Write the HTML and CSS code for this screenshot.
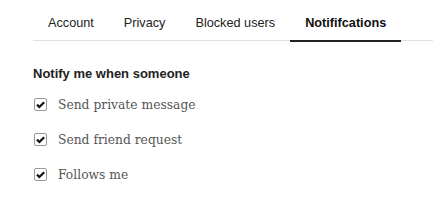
FILE: index.html
```html
<!DOCTYPE html>
<html>
<head>
<meta charset="utf-8">
<link rel="stylesheet" href="styles.css">
</head>
<body>
<div class="page">
  <nav class="tabs">
    <a class="tab">Account</a>
    <a class="tab">Privacy</a>
    <a class="tab">Blocked users</a>
    <a class="tab active">Notififcations</a>
  </nav>
  <section class="panel">
    <h3 class="title">Notify me when someone</h3>
    <label class="opt"><span class="box"><svg viewBox="0 0 13 13" width="13" height="13"><path d="M3 6.6 L5.4 9 L10.2 4.2" fill="none" stroke="#111" stroke-width="2.2"/></svg></span>Send private message</label>
    <label class="opt"><span class="box"><svg viewBox="0 0 13 13" width="13" height="13"><path d="M3 6.6 L5.4 9 L10.2 4.2" fill="none" stroke="#111" stroke-width="2.2"/></svg></span>Send friend request</label>
    <label class="opt"><span class="box"><svg viewBox="0 0 13 13" width="13" height="13"><path d="M3 6.6 L5.4 9 L10.2 4.2" fill="none" stroke="#111" stroke-width="2.2"/></svg></span>Follows me</label>
  </section>
</div>
</body>
</html>
```
FILE: styles.css
```css
html, body { margin: 0; padding: 0; background: #fff; }
.page { padding: 0 0 0 33px; }
.tabs {
  display: flex;
  border-bottom: 1px solid #e0e0e0;
  height: 40px;
  font-family: "Liberation Sans", Arial, sans-serif;
  font-size: 12.7px;
}
.tab {
  padding: 16px 15px 0;
  color: #222;
  box-sizing: border-box;
  height: 42px;
}
.tab.active {
  font-weight: bold;
  color: #111;
  border-bottom: 2px solid #222;
}
.panel { padding-top: 25px; }
.title {
  margin: 0 0 6px;
  font-family: "Liberation Sans", Arial, sans-serif;
  font-size: 13px;
  font-weight: bold;
  color: #222;
}
.opt {
  display: flex;
  align-items: center;
  height: 35px;
  font-family: "DejaVu Serif", serif;
  font-size: 12.3px;
  color: #555;
}
.box {
  width: 11px; height: 11px;
  border: 1px solid #999;
  border-radius: 2px;
  margin: 0 11px 0 1px;
  display: flex;
  align-items: center;
  justify-content: center;
  overflow: hidden;
}
.box svg { flex: none; }
```
